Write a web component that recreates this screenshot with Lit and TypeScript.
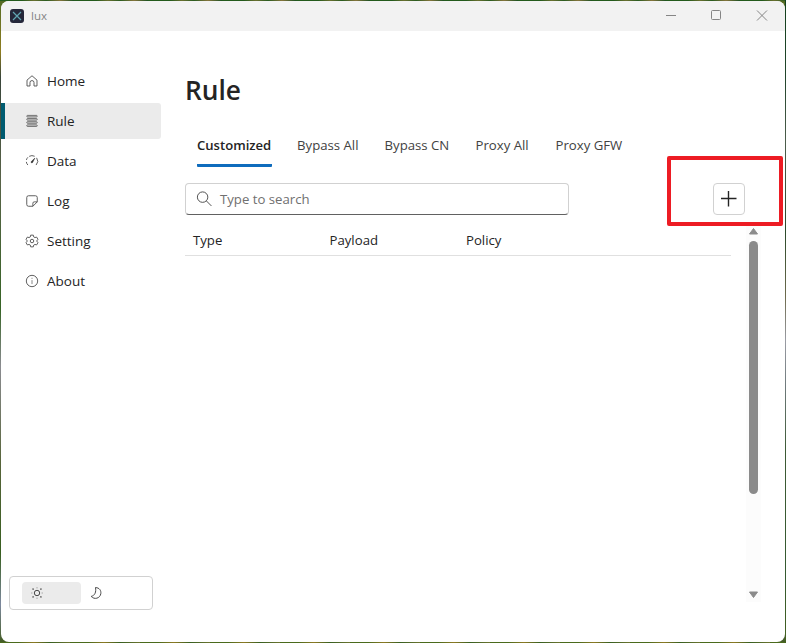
import { LitElement, html, svg, css } from "lit";
import { customElement, state } from "lit/decorators.js";

const icons: Record<string, unknown> = {
  Home: svg`<path d="M2.300 7 8 2l5.700 5v6.700h-3.400v-3.900a2.300 2.300 0 0 0-4.600 0v3.900H2.300z" stroke-linejoin="round"/>`,
  Rule: svg`<g fill="#d8d8d8" stroke="#555" stroke-width=".9"><rect x="2" y="1.600" width="12" height="1.800" rx=".9"/><rect x="2" y="5.200" width="12" height="1.800" rx=".9"/><rect x="2" y="8.800" width="12" height="1.800" rx=".9"/><rect x="2" y="12.400" width="12" height="1.800" rx=".9"/></g>`,
  Data: svg`<path d="M3.300 12.600A6.500 6.500 0 0 1 1.500 9M1.600 6.800A6.500 6.500 0 0 1 3.300 3.800M4.800 2.700A6.500 6.500 0 0 1 11 2.600M13.300 4.400A6.500 6.500 0 0 1 12.700 12.600"/><path d="M11.200 4.800 7.200 8.600a.9.900 0 1 0 1.400 1.200z" fill="#333" stroke="#333" stroke-width=".7"/>`,
  Log: svg`<path d="M4 2h8a2 2 0 0 1 2 2v5l-5 5H4a2 2 0 0 1-2-2V4a2 2 0 0 1 2-2zM9 14v-3.500A1.500 1.500 0 0 1 10.500 9H14"/>`,
  Setting: svg`<path d="m6.500 1.300h3l.5 2.100 1.300.7 2-.6 1.500 2.600L13.300 8l1.500 1.900-1.500 2.600-2-.6-1.300.7-.5 2.100h-3L6 12.600l-1.300-.7-2 .6-1.500-2.600L2.700 8 1.200 6.100l1.500-2.600 2 .6L6 3.400z" stroke-linejoin="round"/><circle cx="8" cy="8" r="2"/>`,
  About: svg`<circle cx="8" cy="8" r="6.500"/><path d="M8 7v4.500M8 4.300v1.300" stroke="#777"/>`,
};

@customElement("app-root")
export class AppRoot extends LitElement {
  @state() private page = "Rule";
  @state() private tab = "Customized";

  static styles = css`
    :host {
      display: block;
      box-sizing: border-box;
      width: 786px;
      height: 643px;
      padding: 1px;
      overflow: hidden;
      font: 13.300px/20px "Open Sans", "Noto Sans", sans-serif;
      color: #242424;
      background:
        linear-gradient(#12401c, #22452c 12%, #4d5d4c 22%, #2b4a2b 36%, #6d6a4c 46%, #9a9ca4 53%, #6f7a7c 60%, #3d5a35 70%, #355a30 90%, #44601e) right / 1px 100% no-repeat,
        repeating-linear-gradient(90deg, #235a1c 0 22px, #6a6f30 34px, #2a5c20 46px, #85743c 60px, #1d5222 74px) top / 100% 1px no-repeat,
        repeating-linear-gradient(90deg, #4a6a1c 0 18px, #8d7a24 34px, #385f20 50px, #6b7430 70px) bottom / 100% 1px no-repeat,
        linear-gradient(#536b24, #8f7d20 8%, #39463a 12%, #596348 28%, #376426 48%, #8b8c91 57%, #57643a 72%, #385f20 86%, #7e899f 94%, #425b22);
    }
    * { box-sizing: border-box; }
    svg { display: block; fill: none; stroke: #4a4a4a; }
    button { font: inherit; color: inherit; border: 0; background: none; padding: 0; margin: 0; text-align: left; }
    .window { position: relative; height: 641px; width: 784px; border-radius: 8px; overflow: hidden; background: #fff; display: flex; flex-direction: column; }
    .titlebar { height: 30px; flex: none; background: #f2f2f2; display: flex; align-items: center; padding-left: 9px; color: #858585; font-size: 11.500px; }
    .name { margin-left: 7px; flex: 1; }
    .controls { display: flex; }
    .controls svg { width: 45.500px; height: 30px; stroke: #858585; }
    .body { display: flex; flex: 1; min-height: 0; }
    .side { width: 160px; padding-top: 32px; display: flex; flex-direction: column; }
    .nav { display: flex; flex-direction: column; gap: 4px; }
    .item { display: flex; align-items: center; height: 36px; padding-left: 24px; gap: 8px; font-size: 13.500px; border-radius: 0 3px 3px 0; }
    .item svg { width: 14px; height: 14px; }
    .item.on { background: #ebebeb; border-left: 4px solid #005b70; padding-left: 20px; }
    .theme { width: 144px; height: 34px; margin: auto 0 32px 8px; padding: 0 12px; border: 1px solid #d1d1d1; border-radius: 4px; display: flex; align-items: center; }
    .mode { width: 59px; height: 22px; border-radius: 4px; display: flex; align-items: center; padding-left: 8px; }
    .mode svg { width: 14px; height: 14px; }
    .mode.on { background: #ebebeb; }
    .main { flex: 1; padding: 38px 0 0 24px; }
    h1 { margin: 0; font-size: 26.300px; line-height: 42px; font-weight: 600; }
    .tabs { display: grid; grid-template-columns: 100px 87.500px 91px 80px 91px; height: 44px; margin-top: 12px; }
    .tab { padding: 0 0 0 12px; color: #424242; display: flex; white-space: nowrap; font-size: 13.200px; }
    .label { height: 44px; line-height: 44px; }
    .tab.on { color: #242424; font-weight: 600; font-size: 13.100px; }
    .tab.on .label { width: 75px; border-bottom: 3px solid #0f6cbd; border-radius: 1px; height: 44px; }
    .tools { display: flex; justify-content: space-between; width: 560px; margin-top: 16px; }
    .search { width: 384px; height: 32px; border: 1px solid #d1d1d1; border-bottom-color: #616161; border-radius: 4px; display: flex; align-items: center; gap: 6px; padding-left: 9px; color: #707070; font-size: 13.200px; }
    .search svg { width: 19px; height: 19px; }
    .add { width: 32px; height: 32px; border: 1px solid #d1d1d1; border-radius: 4px; display: grid; place-items: center; }
    .add svg { width: 20px; height: 20px; stroke: #242424; }
    .list { display: flex; justify-content: space-between; width: 576px; margin-top: 10px; }
    .head { width: 546px; height: 31px; border-bottom: 1px solid #e0e0e0; display: grid; grid-template-columns: 136.500px 136.500px 1fr; line-height: 31px; font-size: 13.200px; }
    .cell { padding-left: 8px; }
    .scroll { width: 15px; height: 377px; background: #fcfcfc; display: flex; flex-direction: column; align-items: center; }
    .scroll svg { width: 15px; height: 16px; stroke: #8b8b8b; fill: #8b8b8b; }
    .thumb { width: 9px; height: 253px; border-radius: 5px; background: #8b8b8b; margin-bottom: auto; }
    .marker { position: absolute; left: 665.500px; top: 155.300px; width: 116px; height: 70px; border: 4px solid #ed1c24; border-radius: 2px; pointer-events: none; }
  `;

  render() {
    return html`
      <div class="window">
        <header class="titlebar">
          <svg width="14" height="14" viewBox="0 0 14 14"><rect width="14" height="14" rx="3" fill="#25273a" stroke="none"/><path d="m3 3 8 8m0-8-8 8" stroke="#62a5b2" stroke-width="1.200"/></svg>
          <span class="name">lux</span>
          <div class="controls">
            <svg viewBox="0 0 45.500 30"><path d="M17 14.500h10"/></svg>
            <svg viewBox="0 0 45.500 30"><rect x="17.500" y="9.500" width="9" height="9" rx="1"/></svg>
            <svg viewBox="0 0 45.500 30"><path d="m17 9.500 10 10m0-10-10 10"/></svg>
          </div>
        </header>
        <div class="body">
          <aside class="side">
            <nav class="nav">
              ${Object.keys(icons).map((n) => html`<button class="item ${n === this.page ? "on" : ""}" @click=${() => (this.page = n)}><svg viewBox="0 0 16 16">${icons[n]}</svg>${n}</button>`)}
            </nav>
            <div class="theme">
              <button class="mode on" aria-label="Light"><svg viewBox="0 0 14 14"><circle cx="7" cy="7" r="2.700"/><path d="M7 1v1.500M7 11.500V13M1 7h1.500M11.500 7H13" stroke="#aaa"/><path d="m2.600 2.600.9.900m7 7 .9.900m0-8.800-.9.900m-7 7-.9.900" stroke="#222" stroke-width="1.200"/></svg></button>
              <button class="mode" aria-label="Dark"><svg viewBox="0 0 14 14"><path d="M6.500 1.500c4 .3 5.800 3 5.300 6.200-.7 4.700-6.500 6.300-9.600 2.700C6 9.500 7.300 6 6.500 1.500z"/></svg></button>
            </div>
          </aside>
          <main class="main">
            <h1>Rule</h1>
            <div class="tabs">
              ${["Customized", "Bypass All", "Bypass CN", "Proxy All", "Proxy GFW"].map((t) => html`<button class="tab ${t === this.tab ? "on" : ""}" @click=${() => (this.tab = t)}><span class="label">${t}</span></button>`)}
            </div>
            <div class="tools">
              <div class="search"><svg viewBox="0 0 20 20"><circle cx="8" cy="7.500" r="5.500"/><path d="m12 11.500 5.300 5.300"/></svg><span>Type to search</span></div>
              <button class="add" aria-label="Add"><svg viewBox="0 0 20 20"><path d="M9.500 2v15.500M2 9.500h15.500" stroke-width="1.400"/></svg></button>
            </div>
            <div class="list">
              <div class="head"><span class="cell">Type</span><span class="cell">Payload</span><span class="cell">Policy</span></div>
              <div class="scroll">
                <svg viewBox="0 0 15 16"><path d="m7.500 3.500 4 5.500h-8z" stroke-linejoin="round"/></svg>
                <div class="thumb"></div>
                <svg viewBox="0 0 15 16"><path d="m7.500 11.500-4-5.500h8z" stroke-linejoin="round"/></svg>
              </div>
            </div>
          </main>
        </div>
        <div class="marker"></div>
      </div>
    `;
  }
}
